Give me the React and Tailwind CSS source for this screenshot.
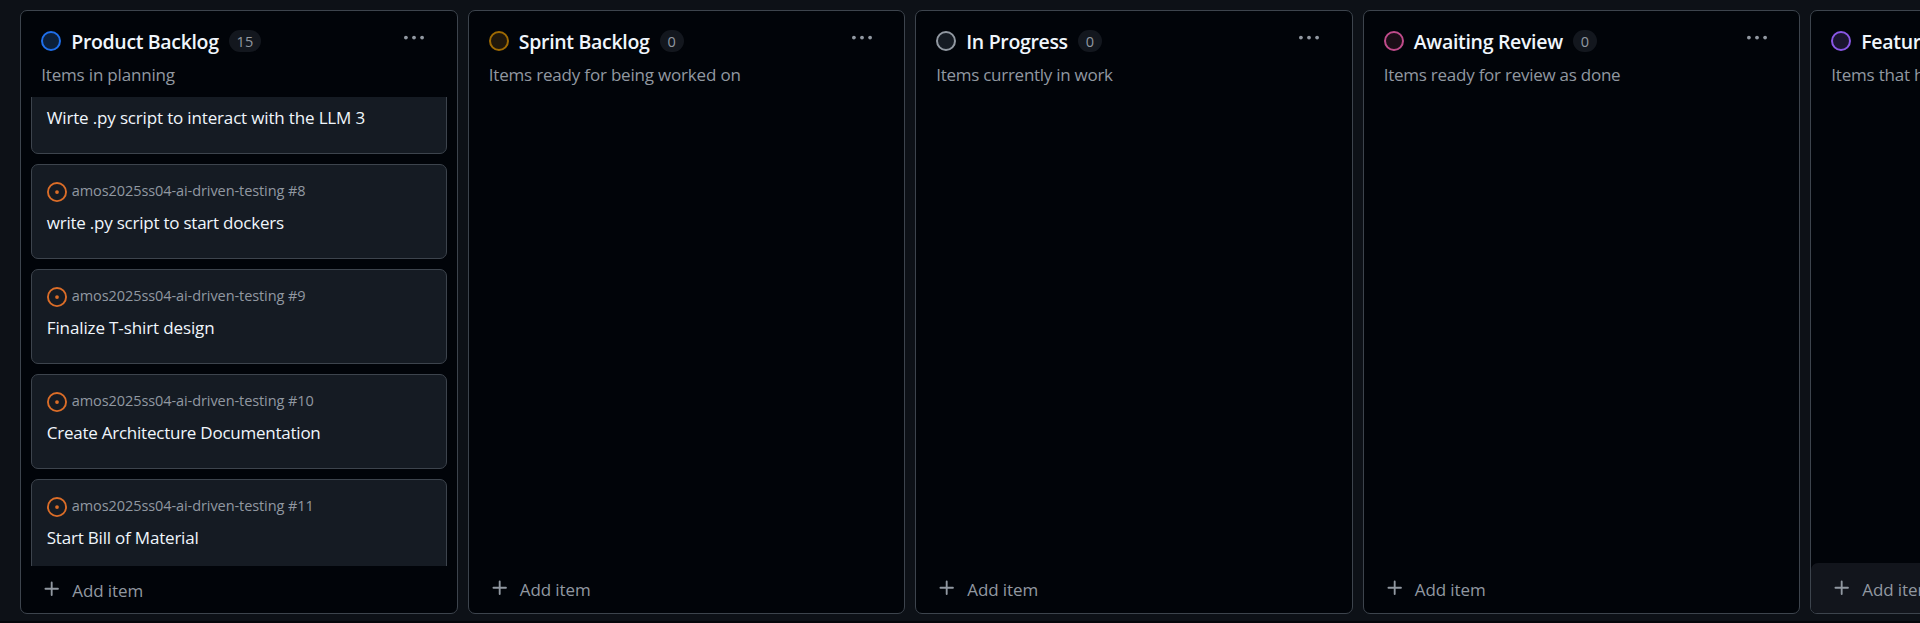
const COLUMNS = [
  {
    name: 'Product Backlog', nameClass: 'tracking-[-0.34px]', count: '15',
    note: 'Items in planning', noteClass: 'tracking-[-0.18px]', dot: 'border-[#1f6feb] bg-[#0c203b]',
    items: [
      { id: 7, title: 'Wirte .py script to interact with the LLM 3', titleClass: 'tracking-[-0.16px]' },
      { id: 8, title: 'write .py script to start dockers', titleClass: 'tracking-[-0.23px]' },
      { id: 9, title: 'Finalize T-shirt design', titleClass: 'tracking-[-0.12px]' },
      { id: 10, title: 'Create Architecture Documentation', titleClass: 'tracking-[-0.24px]' },
      { id: 11, title: 'Start Bill of Material', titleClass: 'tracking-[-0.2px]' },
    ],
  },
  { name: 'Sprint Backlog', nameClass: 'tracking-[-0.3px]', count: '0', note: 'Items ready for being worked on', noteClass: 'tracking-[-0.19px]', dot: 'border-[#9e6a03] bg-[#1f170b]' },
  { name: 'In Progress', nameClass: 'tracking-[-0.33px]', count: '0', note: 'Items currently in work', noteClass: 'tracking-[-0.27px]', dot: 'border-[#9198a1] bg-[#151b23]' },
  { name: 'Awaiting Review', nameClass: 'tracking-[-0.31px]', count: '0', note: 'Items ready for review as done', noteClass: 'tracking-[-0.25px]', dot: 'border-[#bf4b8a] bg-[#1b0e17]' },
  { name: 'Features', nameClass: 'tracking-[-0.3px]', count: '0', note: 'Items that have', noteClass: 'tracking-[-0.2px]', dot: 'border-[#8957e5] bg-[#1b1530]', active: true },
];

function IssueIcon() {
  return (
    <svg viewBox="0 0 16 16" className="size-5 shrink-0 fill-[#db6d28]">
      <path d="M8 9.5a1.5 1.5 0 1 0 0-3 1.5 1.5 0 0 0 0 3Z" />
      <path d="M8 0a8 8 0 1 1 0 16A8 8 0 0 1 8 0ZM1.5 8a6.5 6.5 0 1 0 13 0 6.5 6.5 0 0 0-13 0Z" />
    </svg>
  );
}

function KebabIcon() {
  return (
    <svg viewBox="0 0 20 20" className="mt-[2px] size-5 shrink-0 fill-[#9198a1]">
      <circle cx="1.9" cy="9.6" r="1.9" />
      <circle cx="10" cy="9.6" r="1.9" />
      <circle cx="18.1" cy="9.6" r="1.9" />
    </svg>
  );
}

function PlusIcon() {
  return (
    <svg viewBox="0 0 16 16" className="size-5 shrink-0 fill-[#9198a1]">
      <path d="M7.75 2a.75.75 0 0 1 .75.75V7h4.25a.75.75 0 0 1 0 1.5H8.5v4.25a.75.75 0 0 1-1.5 0V8.5H2.75a.75.75 0 0 1 0-1.5H7V2.75A.75.75 0 0 1 7.75 2Z" />
    </svg>
  );
}

function Card({ item }) {
  return (
    <article className="h-[95px] shrink-0 rounded-[7px] border border-[#3d444d] bg-[#151b23] px-[14.5px] pt-[17px]">
      <div className="flex items-start gap-[5px]">
        <IssueIcon />
        <span className="text-[14.5px] leading-[17px] tracking-[-0.08px] text-[#9198a1]">amos2025ss04-ai-driven-testing #{item.id}</span>
      </div>
      <h3 className={`mt-2 text-[17px] leading-[26px] text-[#f0f6fc] ${item.titleClass}`}>{item.title}</h3>
    </article>
  );
}

function Column({ column }) {
  return (
    <section className="flex h-[603.5px] w-[437.5px] shrink-0 flex-col overflow-hidden rounded-[7px] border border-[#3d444d] bg-[#010409]">
      <header className="flex h-[86px] shrink-0 items-start justify-between pt-[15px] pr-[32.5px] pl-5">
        <div>
          <div className="flex h-[30px] items-center">
            <span className={`size-5 shrink-0 rounded-full border-2 ${column.dot}`} />
            <h2 className={`ml-[10px] pt-[2px] text-[19.5px] leading-[30px] font-semibold whitespace-nowrap text-[#f0f6fc] ${column.nameClass}`}>{column.name}</h2>
            <span className="ml-[10px] flex h-[22px] items-center rounded-full bg-[#13171e] px-2 pt-px text-[14.5px] font-medium text-[#9198a1]">{column.count}</span>
          </div>
          <p className={`mt-[7px] text-[17px] leading-6 whitespace-nowrap text-[#9198a1] ${column.noteClass}`}>{column.note}</p>
        </div>
        <KebabIcon />
      </header>
      <div className="min-h-0 flex-1 overflow-hidden px-[10px]">
        {column.items && (
          <div className="-mt-[38px] flex flex-col gap-[10px]">
            {column.items.map((item) => <Card key={item.id} item={item} />)}
          </div>
        )}
      </div>
      <footer className={`flex shrink-0 items-start gap-[10px] pl-[21px] ${column.active ? 'rounded-t-[7px] bg-[#12151c]' : ''} ${column.items ? 'h-[47px] pt-[13px]' : 'h-[50px] pt-[15px]'}`}>
        <PlusIcon />
        <span className="pt-px text-[17px] leading-[22px] tracking-[-0.1px] whitespace-nowrap text-[#9198a1]">Add item</span>
      </footer>
    </section>
  );
}

export default function App() {
  return (
    <div className="h-[623px] w-full overflow-hidden border-b-2 border-[#05060b] bg-[#0d1117] font-['Open_Sans','Noto_Sans',sans-serif]">
      <main className="flex gap-[10px] pt-[10px] pl-[20.25px]">
        {COLUMNS.map((column) => <Column key={column.name} column={column} />)}
      </main>
    </div>
  );
}
